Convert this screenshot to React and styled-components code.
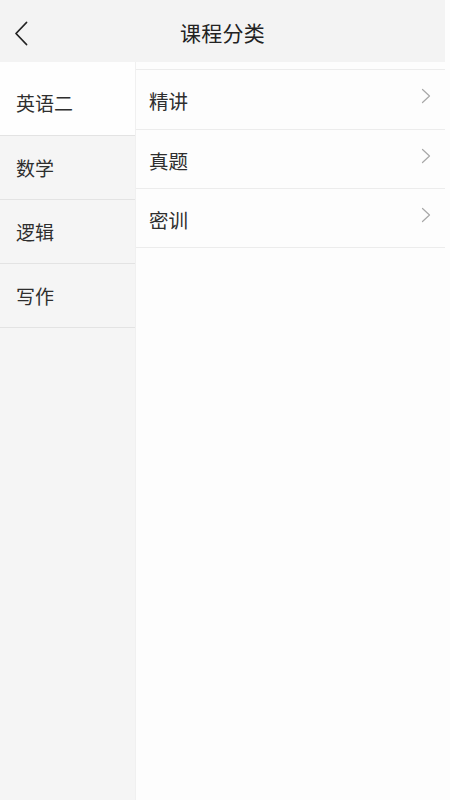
import React, { useState } from "react";
import styled, { createGlobalStyle } from "styled-components";

const Global = createGlobalStyle`
  html, body { margin: 0; padding: 0; background: #fdfdfd; }
  body { font-family: "Noto Sans CJK SC", "Noto Sans", sans-serif; color: #333; }
  * { box-sizing: border-box; }
`;

const Page = styled.div`
  width: 445px;
  height: 800px;
  display: flex;
  flex-direction: column;
  background: #fdfdfd;
`;

const Header = styled.header`
  height: 62px;
  flex: none;
  background: #f3f3f3;
  display: grid;
  grid-template-columns: 48px 1fr 48px;
  align-items: center;
`;

const Back = styled.button`
  border: 0;
  background: transparent;
  padding: 4px 0 0 14px;
  height: 100%;
  display: flex;
  align-items: center;
  color: #222;
`;

const Title = styled.h1`
  margin: 0;
  text-align: center;
  font-size: 21px;
  font-weight: 400;
  color: #222;
  letter-spacing: 0.3px;
  padding-top: 1px;
`;

const Body = styled.div`
  flex: 1;
  display: flex;
  min-height: 0;
`;

const Sidebar = styled.nav`
  width: 136px;
  flex: none;
  background: #f5f5f5;
  display: flex;
  flex-direction: column;
  border-right: 1px solid #f0f0f0;
`;

const SideItem = styled.div`
  height: ${(p) => (p.$active ? 74 : 64)}px;
  padding-left: 16px;
  padding-top: ${(p) => (p.$active ? 8 : 0)}px;
  display: flex;
  align-items: center;
  font-size: 19px;
  color: #2e2e2e;
  background: ${(p) => (p.$active ? "#fefefe" : "transparent")};
  border-bottom: 1px solid #e3e3e3;
  cursor: pointer;
`;

const List = styled.div`
  flex: 1;
  padding-top: 7px;
  background: #fdfdfd;
`;

const Row = styled.div`
  height: 59.5px;
  display: flex;
  align-items: center;
  justify-content: space-between;
  padding: 3px 14px 0 13px;
  border-top: 1px solid #ececec;
  font-size: 19.5px;
  color: #2e2e2e;
  &:last-child { border-bottom: 1px solid #ececec; }
`;

const Chevron = styled.svg`
  width: 10px;
  height: 16px;
  margin-top: -9px;
`;

const sides = ["英语二", "数学", "逻辑", "写作"];
const rows = ["精讲", "真题", "密训"];

export default function App() {
  const [active, setActive] = useState(0);
  return (
    <>
      <Global />
      <Page>
        <Header>
          <Back aria-label="返回">
            <svg width="14" height="25" viewBox="0 0 14 25">
              <path d="M12.5 1.5 L2 12.5 L12.5 23.5" fill="none" stroke="#222" strokeWidth="1.8" strokeLinecap="round" strokeLinejoin="round" />
            </svg>
          </Back>
          <Title>课程分类</Title>
          <span />
        </Header>
        <Body>
          <Sidebar>
            {sides.map((s, i) => (
              <SideItem key={s} $active={i === active} onClick={() => setActive(i)}>
                {s}
              </SideItem>
            ))}
          </Sidebar>
          <List>
            {rows.map((r) => (
              <Row key={r}>
                <span>{r}</span>
                <Chevron viewBox="0 0 10 16">
                  <path d="M1.5 1.5 L8.5 8 L1.5 14.5" fill="none" stroke="#a8a8a8" strokeWidth="1.2" strokeLinecap="round" strokeLinejoin="round" />
                </Chevron>
              </Row>
            ))}
          </List>
        </Body>
      </Page>
    </>
  );
}
